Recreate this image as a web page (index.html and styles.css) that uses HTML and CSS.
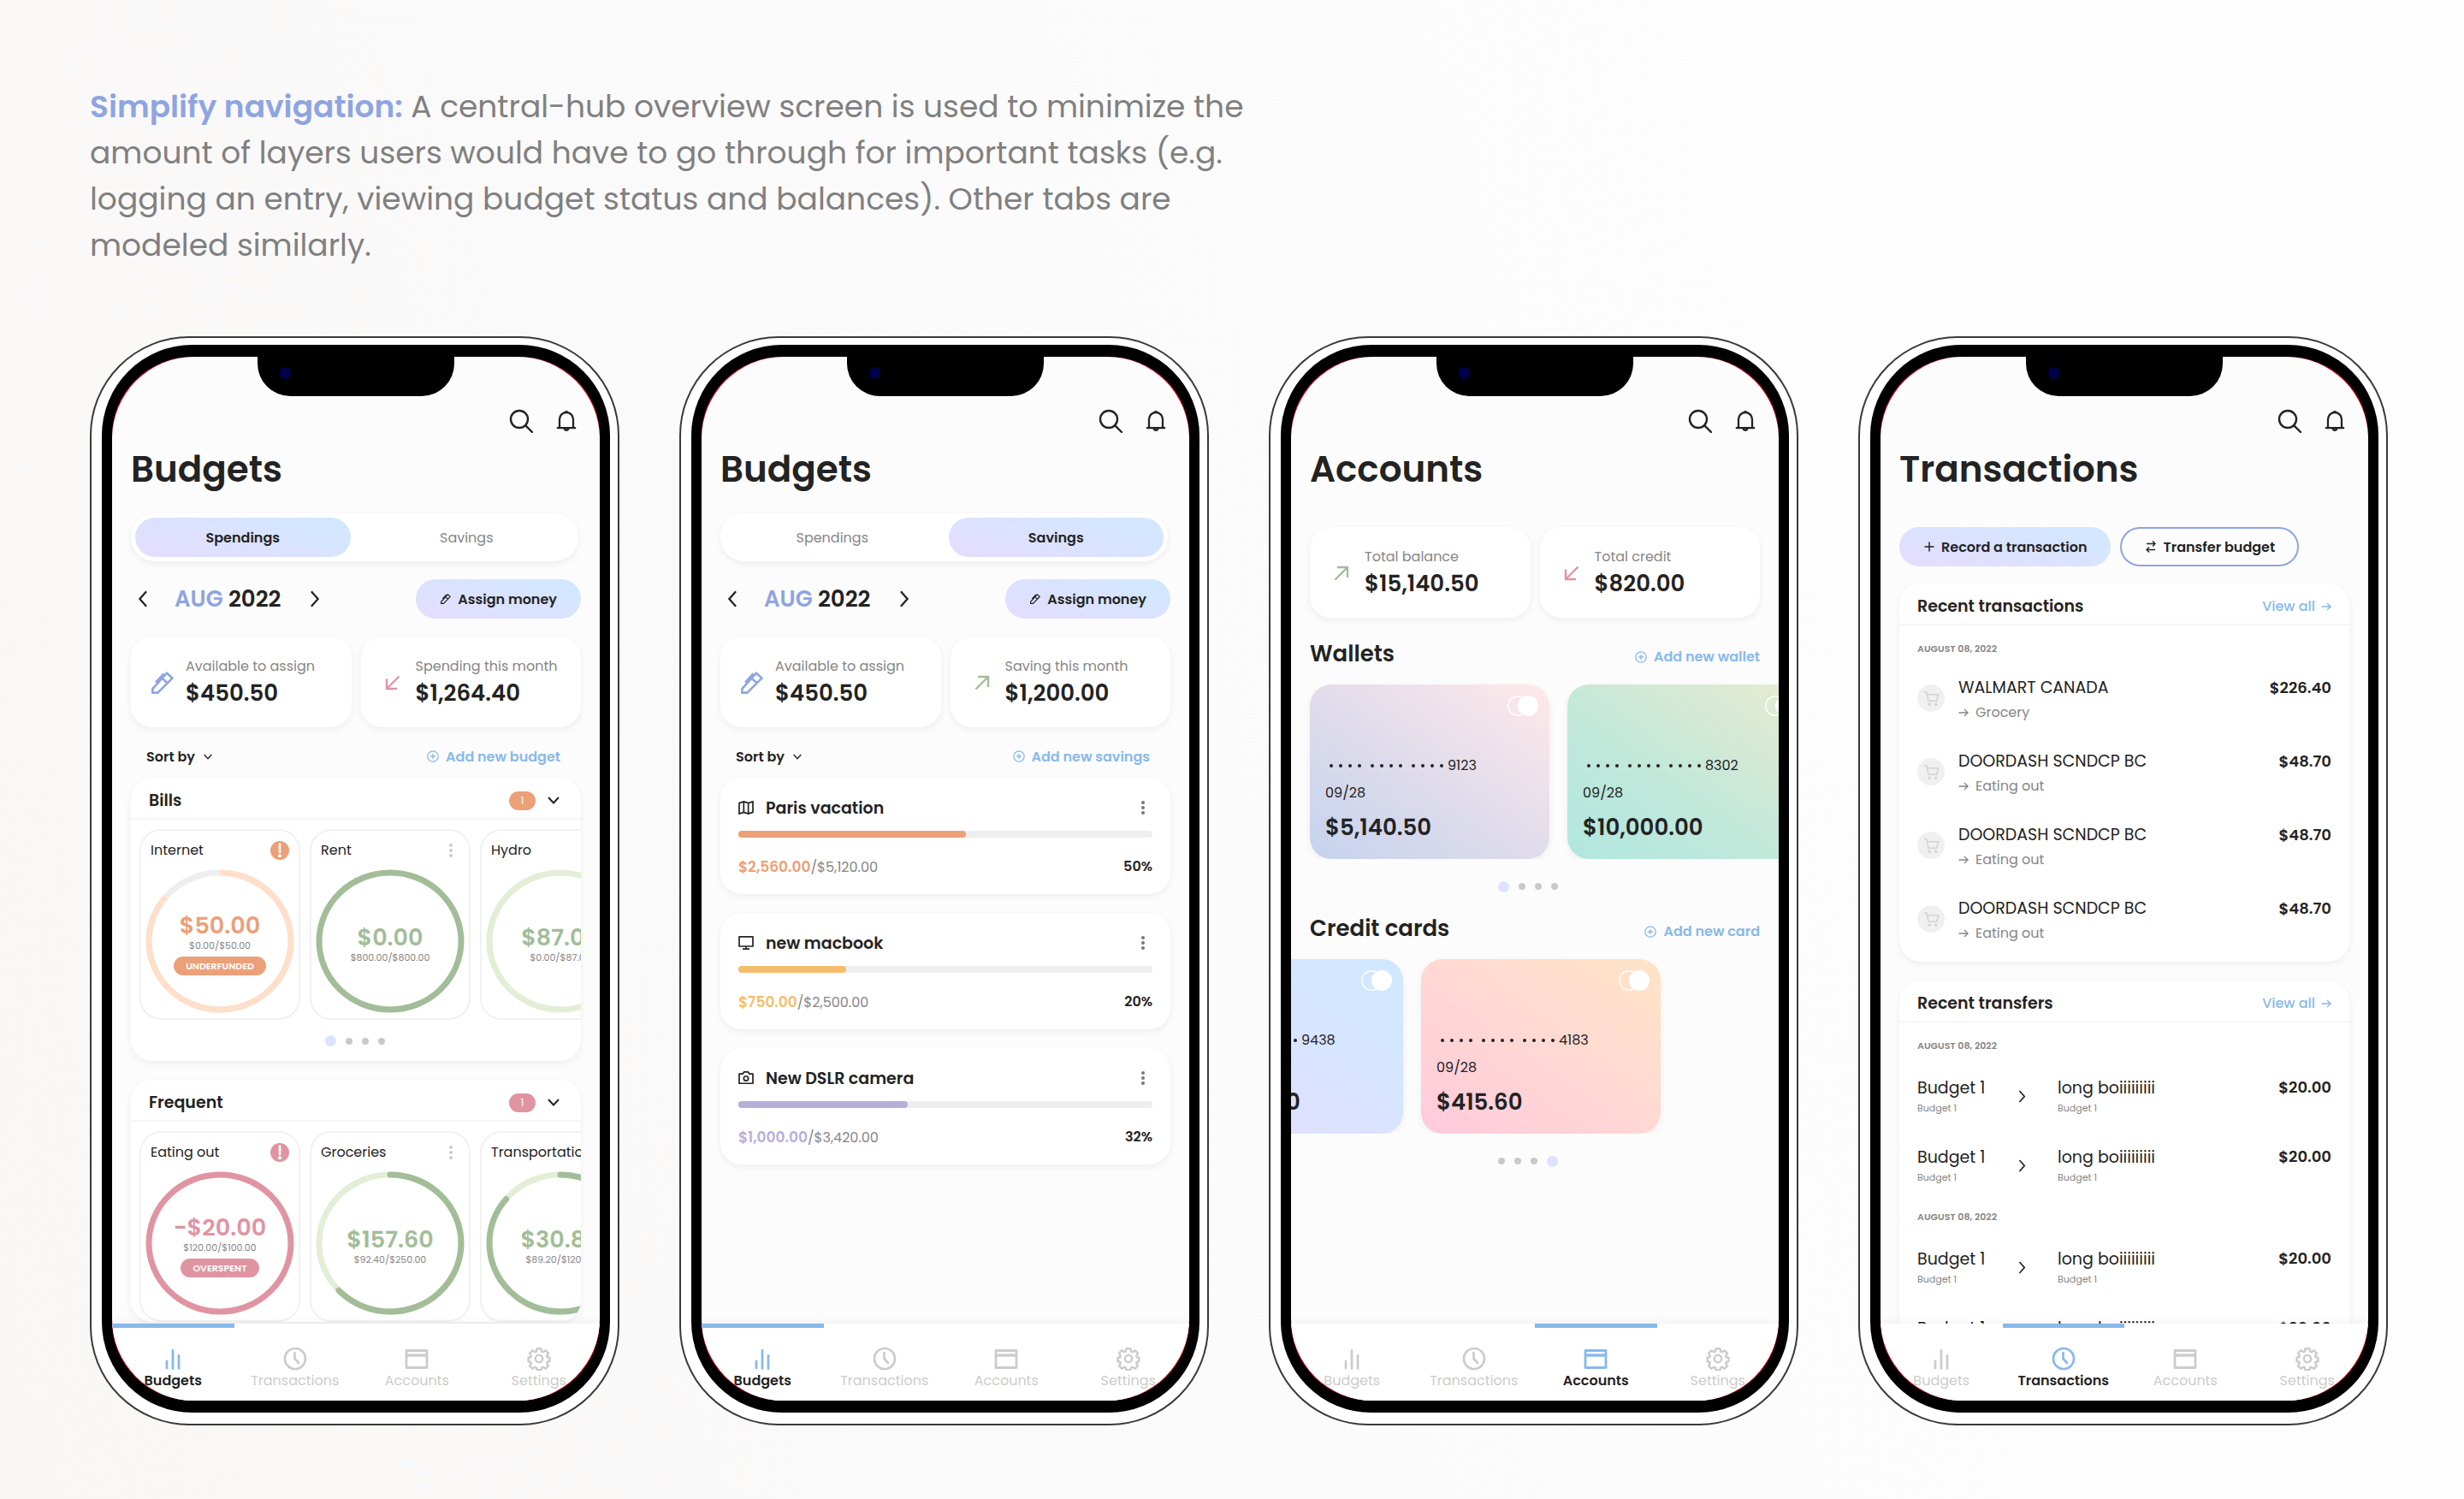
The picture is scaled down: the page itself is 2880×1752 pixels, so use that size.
FILE: index.html
```html
<!DOCTYPE html>
<html lang="en">
<head>
<meta charset="utf-8">
<meta name="viewport" content="width=device-width, initial-scale=1">
<title>Simplify navigation</title>
<link rel="stylesheet" href="styles.css">
</head>
<body>
<svg class="sprite" aria-hidden="true">
  <symbol id="search" viewBox="0 0 28 28"><g fill="none" stroke="currentColor" stroke-width="2.4" stroke-linecap="round"><circle cx="12" cy="12" r="10"/><path d="M19.3 19.3 27 27"/></g></symbol>
  <symbol id="bell" viewBox="0 0 24 27"><g fill="none" stroke="currentColor" stroke-width="2.3" stroke-linejoin="round" stroke-linecap="round"><path d="M1.8 21.2h20.4M4 21V11a8 8 0 0 1 16 0v10M9.5 21.6a2.6 3 0 0 0 5 0"/><path d="M11 2.4h2"/></g></symbol>
  <symbol id="pen" viewBox="0 0 24 24"><path d="M1.3 22.7v-4.2L16.6 1.6l5.9 5.4L6.8 22.7zM11.6 7.2l5.8 5.2M4.6 11.6 12.6 3l2.4 1.6" fill="none" stroke="currentColor" stroke-width="2.4"/></symbol>
  <symbol id="down-left" viewBox="0 0 18 18"><path d="M16.5 1.5 2 16M2 4.5V16h12" fill="none" stroke="currentColor" stroke-width="2.4"/></symbol>
  <symbol id="up-right" viewBox="0 0 18 18"><path d="M1.5 16.5 16 2M4 2h12v12" fill="none" stroke="currentColor" stroke-width="2.4"/></symbol>
  <symbol id="chev-left" viewBox="0 0 12 22"><path d="M10.5 1.5 2 11l8.500 9.500" fill="none" stroke="currentColor" stroke-width="2.500"/></symbol>
  <symbol id="chev-right" viewBox="0 0 12 22"><path d="M1.5 1.5 10 11l-8.500 9.500" fill="none" stroke="currentColor" stroke-width="2.500"/></symbol>
  <symbol id="chev-down" viewBox="0 0 14 9"><path d="m1 1 6 6.500L13 1" fill="none" stroke="currentColor" stroke-width="2"/></symbol>
  <symbol id="plus-circle" viewBox="0 0 14 14"><path d="M7 4v6M4 7h6" stroke="currentColor" stroke-width="1.3"/><circle cx="7" cy="7" r="6.200" fill="none" stroke="currentColor" stroke-width="1.300"/></symbol>
  <symbol id="plus" viewBox="0 0 12 12"><path d="M6 .5v11M.5 6h11" stroke="currentColor" stroke-width="1.5"/></symbol>
  <symbol id="swap" viewBox="0 0 12 14"><path d="M1 3.500h10M8 .5l3 3-3 3M11 10.500H1M4 7.500l-3 3 3 3" fill="none" stroke="currentColor" stroke-width="1.400"/></symbol>
  <symbol id="arrow" viewBox="0 0 12 10"><path d="M.5 5h10.500M7 1l4 4-4 4" fill="none" stroke="currentColor" stroke-width="1.400"/></symbol>
  <symbol id="kebab" viewBox="0 0 4 16"><g fill="currentColor"><circle cx="2" cy="2" r="2"/><circle cx="2" cy="8" r="2"/><circle cx="2" cy="14" r="2"/></g></symbol>
  <symbol id="alert" viewBox="0 0 22 22"><circle cx="11" cy="11" r="11" fill="currentColor"/><path d="M11 3.500v9.500" stroke="#fff" stroke-width="2.600" stroke-linecap="round"/><circle cx="11" cy="17.300" r="2" fill="#fff"/></symbol>
  <symbol id="map" viewBox="0 0 20 18"><path d="m1 3 6-2v14l-6 2zM7 1l6 2v14l-6-2M13 3l6-2v14l-6 2" fill="none" stroke="currentColor" stroke-width="1.900" stroke-linejoin="round"/></symbol>
  <symbol id="monitor" viewBox="0 0 20 18"><path d="M1 1h18v12.500H1zM10 13.500V17M5.500 17h9" fill="none" stroke="currentColor" stroke-width="1.900" stroke-linejoin="round"/></symbol>
  <symbol id="camera" viewBox="0 0 20 18"><path d="M1 3.500h4.500L7.500 1h5l2 2.500H19V16H1z" fill="none" stroke="currentColor" stroke-width="1.900" stroke-linejoin="round"/><circle cx="10" cy="9.500" r="3" fill="none" stroke="currentColor" stroke-width="1.900"/></symbol>
  <symbol id="cart" viewBox="0 0 20 20"><path d="M1 2h3l2.500 11h10L18.500 5H5" fill="none" stroke="currentColor" stroke-width="1.600"/><circle cx="7.500" cy="17" r="1.700" fill="currentColor"/><circle cx="15.500" cy="17" r="1.700" fill="currentColor"/></symbol>
  <symbol id="brand" viewBox="0 0 36 24"><circle cx="12" cy="12" r="11.200" fill="none" stroke="#fff" stroke-width="1.400"/><circle cx="24" cy="12" r="12" fill="#fff"/></symbol>
  <symbol id="bars" viewBox="0 0 28 28"><path d="M7 17v8M14 4.500v21M21 10.500v15" stroke="currentColor" stroke-width="2.800" stroke-linecap="round"/></symbol>
  <symbol id="clock" viewBox="0 0 28 28"><g fill="none" stroke="currentColor" stroke-width="2.700" stroke-linecap="round"><circle cx="14" cy="14" r="12"/><path d="M13.500 7v7l4.500 5"/></g></symbol>
  <symbol id="card" viewBox="0 0 28 28"><path d="M2 4.500h24v20H2z" fill="none" stroke="currentColor" stroke-width="2.800" stroke-linejoin="round"/><path d="M2 10h24" stroke="currentColor" stroke-width="3.400"/></symbol>
  <symbol id="gear" viewBox="0 0 28 28"><g fill="none" stroke="currentColor" stroke-width="2.500" stroke-linejoin="round"><circle cx="14" cy="14" r="4.200"/><path d="M11.600 2.200h4.800l.8 3.400 1.500.6 3-1.800 3.300 3.300-1.800 3 .6 1.500 2.600.6v4.400l-2.600.6-.6 1.500 1.800 3-3.300 3.300-3-1.800-1.500.6-.8 2.800h-4.800l-.8-2.800-1.500-.6-3 1.800L3 22.300l1.800-3-.6-1.500-2.600-.6v-4.400l2.600-.6.6-1.500-1.800-3 3.300-3.300 3 1.800 1.500-.6z"/></g></symbol>
</svg>

<header class="intro">
  <p><strong>Simplify navigation:</strong> A central-hub overview screen is used to minimize the<br>amount of layers users would have to go through for important tasks (e.g.<br>logging an entry, viewing budget status and balances). Other tabs are<br>modeled similarly.</p>
</header>

<div class="phones">

  <!-- Budgets: spendings -->
  <article class="phone"><div class="bezel"><div class="screen">
    <div class="notch"></div>
    <main class="content">
      <div class="tools"><button class="icon-btn" aria-label="Search"><svg class="i28"><use href="#search"/></svg></button><button class="icon-btn" aria-label="Notifications"><svg class="i-bell"><use href="#bell"/></svg></button></div>
      <h1>Budgets</h1>
      <div class="toggle"><button class="on">Spendings</button><button>Savings</button></div>
      <div class="month">
        <button class="icon-btn" aria-label="Previous month"><svg class="i-side"><use href="#chev-left"/></svg></button>
        <span class="date"><b>AUG</b> 2022</span>
        <button class="icon-btn" aria-label="Next month"><svg class="i-side"><use href="#chev-right"/></svg></button>
        <button class="pill"><svg class="i12"><use href="#pen"/></svg>Assign money</button>
      </div>
      <div class="stats">
        <div class="stat"><svg class="i26 blue"><use href="#pen"/></svg><div><span>Available to assign</span><b>$450.50</b></div></div>
        <div class="stat"><svg class="i18 red"><use href="#down-left"/></svg><div><span>Spending this month</span><b>$1,264.40</b></div></div>
      </div>
      <div class="sortbar"><button class="sort">Sort by<svg class="i-down-s"><use href="#chev-down"/></svg></button><a href="#" class="add"><svg class="i14"><use href="#plus-circle"/></svg>Add new budget</a></div>

      <section class="group">
        <header class="group-head"><h2>Bills</h2><span class="count orange-bg">1</span><button class="icon-btn" aria-label="Collapse Bills"><svg class="i-down"><use href="#chev-down"/></svg></button></header>
        <div class="rings">
          <div class="ring-card"><div class="ring-head"><h3>Internet</h3><svg class="i22 orange"><use href="#alert"/></svg></div>
            <div class="ring"><svg viewBox="0 0 174 168"><ellipse cx="87" cy="84" rx="83" ry="80" stroke="#eeeeee"/><path pathLength="100" d="M87 4a83 80 0 0 1 0 160a83 80 0 0 1 0-160" stroke="#ffdfca" stroke-dasharray="86 100"/></svg>
              <div class="ring-text"><b class="orange">$50.00</b><small>$0.00/$50.00</small><em class="orange-bg">UNDERFUNDED</em></div></div></div>
          <div class="ring-card"><div class="ring-head"><h3>Rent</h3><button class="icon-btn faint" aria-label="Rent options"><svg class="i-kebab"><use href="#kebab"/></svg></button></div>
            <div class="ring"><svg viewBox="0 0 174 168"><ellipse cx="87" cy="84" rx="83" ry="80" stroke="#a2bd98"/></svg>
              <div class="ring-text"><b class="green">$0.00</b><small>$800.00/$800.00</small></div></div></div>
          <div class="ring-card"><div class="ring-head"><h3>Hydro</h3></div>
            <div class="ring"><svg viewBox="0 0 174 168"><ellipse cx="87" cy="84" rx="83" ry="80" stroke="#e4eed7"/></svg>
              <div class="ring-text"><b class="green">$87.00</b><small>$0.00/$87.00</small></div></div></div>
        </div>
        <div class="dots"><i class="on"></i><i></i><i></i><i></i></div>
      </section>

      <section class="group">
        <header class="group-head"><h2>Frequent</h2><span class="count red-bg">1</span><button class="icon-btn" aria-label="Collapse Frequent"><svg class="i-down"><use href="#chev-down"/></svg></button></header>
        <div class="rings">
          <div class="ring-card"><div class="ring-head"><h3>Eating out</h3><svg class="i22 red"><use href="#alert"/></svg></div>
            <div class="ring"><svg viewBox="0 0 174 168"><ellipse cx="87" cy="84" rx="83" ry="80" stroke="#e094a2"/></svg>
              <div class="ring-text"><b class="red">-$20.00</b><small>$120.00/$100.00</small><em class="red-bg">OVERSPENT</em></div></div></div>
          <div class="ring-card"><div class="ring-head"><h3>Groceries</h3><button class="icon-btn faint" aria-label="Groceries options"><svg class="i-kebab"><use href="#kebab"/></svg></button></div>
            <div class="ring"><svg viewBox="0 0 174 168"><ellipse cx="87" cy="84" rx="83" ry="80" stroke="#e4eed7"/><path pathLength="100" stroke-linecap="round" d="M87 4a83 80 0 0 1 0 160a83 80 0 0 1 0-160" stroke="#a2bd98" stroke-dasharray="63 100"/></svg>
              <div class="ring-text"><b class="green">$157.60</b><small>$92.40/$250.00</small></div></div></div>
          <div class="ring-card"><div class="ring-head"><h3>Transportation</h3></div>
            <div class="ring"><svg viewBox="0 0 174 168"><ellipse cx="87" cy="84" rx="83" ry="80" stroke="#e4eed7"/><path pathLength="100" stroke-linecap="round" d="M87 4a83 80 0 0 1 0 160a83 80 0 0 1 0-160" stroke="#a2bd98" stroke-dasharray="86 100"/></svg>
              <div class="ring-text"><b class="green">$30.80</b><small>$89.20/$120.00</small></div></div></div>
        </div>
      </section>
    </main>
    <nav class="tabs"><a href="#" class="on"><svg class="i28"><use href="#bars"/></svg>Budgets</a><a href="#"><svg class="i28"><use href="#clock"/></svg>Transactions</a><a href="#"><svg class="i28"><use href="#card"/></svg>Accounts</a><a href="#"><svg class="i28"><use href="#gear"/></svg>Settings</a></nav>
  </div></div></article>

  <!-- Budgets: savings -->
  <article class="phone"><div class="bezel"><div class="screen">
    <div class="notch"></div>
    <main class="content">
      <div class="tools"><button class="icon-btn" aria-label="Search"><svg class="i28"><use href="#search"/></svg></button><button class="icon-btn" aria-label="Notifications"><svg class="i-bell"><use href="#bell"/></svg></button></div>
      <h1>Budgets</h1>
      <div class="toggle"><button>Spendings</button><button class="on">Savings</button></div>
      <div class="month">
        <button class="icon-btn" aria-label="Previous month"><svg class="i-side"><use href="#chev-left"/></svg></button>
        <span class="date"><b>AUG</b> 2022</span>
        <button class="icon-btn" aria-label="Next month"><svg class="i-side"><use href="#chev-right"/></svg></button>
        <button class="pill"><svg class="i12"><use href="#pen"/></svg>Assign money</button>
      </div>
      <div class="stats">
        <div class="stat"><svg class="i26 blue"><use href="#pen"/></svg><div><span>Available to assign</span><b>$450.50</b></div></div>
        <div class="stat"><svg class="i18 green"><use href="#up-right"/></svg><div><span>Saving this month</span><b>$1,200.00</b></div></div>
      </div>
      <div class="sortbar"><button class="sort">Sort by<svg class="i-down-s"><use href="#chev-down"/></svg></button><a href="#" class="add"><svg class="i14"><use href="#plus-circle"/></svg>Add new savings</a></div>

      <section class="goal">
        <header><svg class="i-goal"><use href="#map"/></svg><h2>Paris vacation</h2><button class="icon-btn gray" aria-label="Paris vacation options"><svg class="i-kebab"><use href="#kebab"/></svg></button></header>
        <div class="track"><div class="fill orange-bg" style="width:55%"></div></div>
        <p><span><b class="orange">$2,560.00</b>/$5,120.00</span><strong>50%</strong></p>
      </section>
      <section class="goal">
        <header><svg class="i-goal"><use href="#monitor"/></svg><h2>new macbook</h2><button class="icon-btn gray" aria-label="new macbook options"><svg class="i-kebab"><use href="#kebab"/></svg></button></header>
        <div class="track"><div class="fill yellow-bg" style="width:26%"></div></div>
        <p><span><b class="yellow">$750.00</b>/$2,500.00</span><strong>20%</strong></p>
      </section>
      <section class="goal">
        <header><svg class="i-goal"><use href="#camera"/></svg><h2>New DSLR camera</h2><button class="icon-btn gray" aria-label="New DSLR camera options"><svg class="i-kebab"><use href="#kebab"/></svg></button></header>
        <div class="track"><div class="fill purple-bg" style="width:41%"></div></div>
        <p><span><b class="purple">$1,000.00</b>/$3,420.00</span><strong>32%</strong></p>
      </section>
    </main>
    <nav class="tabs"><a href="#" class="on"><svg class="i28"><use href="#bars"/></svg>Budgets</a><a href="#"><svg class="i28"><use href="#clock"/></svg>Transactions</a><a href="#"><svg class="i28"><use href="#card"/></svg>Accounts</a><a href="#"><svg class="i28"><use href="#gear"/></svg>Settings</a></nav>
  </div></div></article>

  <!-- Accounts -->
  <article class="phone"><div class="bezel"><div class="screen">
    <div class="notch"></div>
    <main class="content">
      <div class="tools"><button class="icon-btn" aria-label="Search"><svg class="i28"><use href="#search"/></svg></button><button class="icon-btn" aria-label="Notifications"><svg class="i-bell"><use href="#bell"/></svg></button></div>
      <h1 class="spaced">Accounts</h1>
      <div class="stats">
        <div class="stat"><svg class="i18 green"><use href="#up-right"/></svg><div><span>Total balance</span><b>$15,140.50</b></div></div>
        <div class="stat"><svg class="i18 red"><use href="#down-left"/></svg><div><span>Total credit</span><b>$820.00</b></div></div>
      </div>
      <div class="section-head"><h2>Wallets</h2><a href="#" class="add"><svg class="i14"><use href="#plus-circle"/></svg>Add new wallet</a></div>
      <div class="deck">
        <div class="bank iris"><svg class="brand"><use href="#brand"/></svg><p class="number"><span><i></i><i></i><i></i><i></i></span><span><i></i><i></i><i></i><i></i></span><span><i></i><i></i><i></i><i></i></span>9123</p><p>09/28</p><b>$5,140.50</b></div>
        <div class="bank mint"><svg class="brand"><use href="#brand"/></svg><p class="number"><span><i></i><i></i><i></i><i></i></span><span><i></i><i></i><i></i><i></i></span><span><i></i><i></i><i></i><i></i></span>8302</p><p>09/28</p><b>$10,000.00</b></div>
      </div>
      <div class="dots deck-dots"><i class="on"></i><i></i><i></i><i></i></div>
      <div class="section-head"><h2>Credit cards</h2><a href="#" class="add"><svg class="i14"><use href="#plus-circle"/></svg>Add new card</a></div>
      <div class="deck at-end">
        <div class="bank sky"><svg class="brand"><use href="#brand"/></svg><p class="number"><span><i></i><i></i><i></i><i></i></span><span><i></i><i></i><i></i><i></i></span><span><i></i><i></i><i></i><i></i></span>9438</p><p>09/28</p><b>$10,404.40</b></div>
        <div class="bank peach"><svg class="brand"><use href="#brand"/></svg><p class="number"><span><i></i><i></i><i></i><i></i></span><span><i></i><i></i><i></i><i></i></span><span><i></i><i></i><i></i><i></i></span>4183</p><p>09/28</p><b>$415.60</b></div>
      </div>
      <div class="dots deck-dots"><i></i><i></i><i></i><i class="on"></i></div>
    </main>
    <nav class="tabs"><a href="#"><svg class="i28"><use href="#bars"/></svg>Budgets</a><a href="#"><svg class="i28"><use href="#clock"/></svg>Transactions</a><a href="#" class="on"><svg class="i28"><use href="#card"/></svg>Accounts</a><a href="#"><svg class="i28"><use href="#gear"/></svg>Settings</a></nav>
  </div></div></article>

  <!-- Transactions -->
  <article class="phone"><div class="bezel"><div class="screen">
    <div class="notch"></div>
    <main class="content">
      <div class="tools"><button class="icon-btn" aria-label="Search"><svg class="i28"><use href="#search"/></svg></button><button class="icon-btn" aria-label="Notifications"><svg class="i-bell"><use href="#bell"/></svg></button></div>
      <h1 class="spaced">Transactions</h1>
      <div class="actions"><button class="pill"><svg class="i12"><use href="#plus"/></svg>Record a transaction</button><button class="pill outline"><svg class="i12"><use href="#swap"/></svg>Transfer budget</button></div>

      <section class="group">
        <header class="group-head"><h2>Recent transactions</h2><a href="#" class="view">View all<svg class="i-arrow"><use href="#arrow"/></svg></a></header>
        <h4>AUGUST 08, 2022</h4>
        <ul class="entries">
          <li><span class="cart"><svg><use href="#cart"/></svg></span><div><p>WALMART CANADA</p><small><svg class="i-arrow"><use href="#arrow"/></svg>Grocery</small></div><b>$226.40</b></li>
          <li><span class="cart"><svg><use href="#cart"/></svg></span><div><p>DOORDASH SCNDCP BC</p><small><svg class="i-arrow"><use href="#arrow"/></svg>Eating out</small></div><b>$48.70</b></li>
          <li><span class="cart"><svg><use href="#cart"/></svg></span><div><p>DOORDASH SCNDCP BC</p><small><svg class="i-arrow"><use href="#arrow"/></svg>Eating out</small></div><b>$48.70</b></li>
          <li><span class="cart"><svg><use href="#cart"/></svg></span><div><p>DOORDASH SCNDCP BC</p><small><svg class="i-arrow"><use href="#arrow"/></svg>Eating out</small></div><b>$48.70</b></li>
        </ul>
      </section>

      <section class="group">
        <header class="group-head"><h2>Recent transfers</h2><a href="#" class="view">View all<svg class="i-arrow"><use href="#arrow"/></svg></a></header>
        <h4>AUGUST 08, 2022</h4>
        <ul class="transfers">
          <li><div><p>Budget 1</p><small>Budget 1</small></div><svg class="i-to"><use href="#chev-right"/></svg><div><p>long boiiiiiiiii</p><small>Budget 1</small></div><b>$20.00</b></li>
          <li><div><p>Budget 1</p><small>Budget 1</small></div><svg class="i-to"><use href="#chev-right"/></svg><div><p>long boiiiiiiiii</p><small>Budget 1</small></div><b>$20.00</b></li>
        </ul>
        <h4>AUGUST 08, 2022</h4>
        <ul class="transfers">
          <li><div><p>Budget 1</p><small>Budget 1</small></div><svg class="i-to"><use href="#chev-right"/></svg><div><p>long boiiiiiiiii</p><small>Budget 1</small></div><b>$20.00</b></li>
          <li><div><p>Budget 1</p><small>Budget 1</small></div><svg class="i-to"><use href="#chev-right"/></svg><div><p>long boiiiiiiiii</p><small>Budget 1</small></div><b>$20.00</b></li>
        </ul>
      </section>
    </main>
    <nav class="tabs"><a href="#"><svg class="i28"><use href="#bars"/></svg>Budgets</a><a href="#" class="on"><svg class="i28"><use href="#clock"/></svg>Transactions</a><a href="#"><svg class="i28"><use href="#card"/></svg>Accounts</a><a href="#"><svg class="i28"><use href="#gear"/></svg>Settings</a></nav>
  </div></div></article>
</div>
</body>
</html>
```
FILE: styles.css
```css
:root {
  --ink: #232323;
  --muted: #868686;
  --faint: #cccccc;
  --sky: #88b9ea;
  --blue: #8ea5e0;
  --orange: #eba078;
  --red: #e094a2;
  --green: #a2bd98;
  --yellow: #f5bd6c;
  --purple: #b7aeda;
  --lilac: linear-gradient(15deg, #e6dcfd, #dbe2ff 45%, #d0e9ff);
  --shadow: 0 3px 8px rgba(0, 0, 0, 0.06);
}

* { box-sizing: border-box; margin: 0; padding: 0; }

body {
  min-height: 100vh;
  padding: 98px 89px 86px 105px;
  font-family: Poppins, Inter, "Open Sans", sans-serif;
  font-size: 16px;
  color: var(--ink);
  background: linear-gradient(75deg, #f8f7f6, #fbfafa 35%, #fdfdfd 75%, #fdfdfd);
}

button, a { font: inherit; color: inherit; text-decoration: none; }
button { border: 0; background: none; }
h1, h2, h3, h4 { font-weight: 600; }
ul { list-style: none; }
b, strong { font-weight: 600; }
svg { display: block; flex: none; }
.sprite { display: none; }

.intro { margin-bottom: 79px; font-size: 36px; line-height: 54px; color: #808080; }
.intro strong { color: var(--blue); }

.phones { display: grid; grid-template-columns: repeat(4, minmax(0, 1fr)); gap: 70px; }

/* Phone shell */
.phone { aspect-ratio: 619 / 1273; padding: 8px 9px 13px 12px; border: 2px solid #3a3a3a; border-radius: 116px; background: #fff; }
/* The content-box layer leaves a hairline of red in the corners of the display */
.bezel { height: 100%; padding: 14px 12px 14px 12px; border-radius: 106px; background: linear-gradient(#c8102e, #c8102e) content-box, #000; }
.screen { position: relative; display: flex; flex-direction: column; height: 100%; border-radius: 96px; overflow: hidden; background: #fcfcfc; }
.notch { position: absolute; top: 0; left: 50%; width: 230px; height: 46px; margin-left: -115px; border-radius: 0 0 38px 38px; background: #000; }
.notch::after { content: ""; display: block; width: 13px; height: 14px; margin: 12px 0 0 26px; border-radius: 50%; background: #00004c; }

.content { flex: 1; min-height: 0; padding: 61px 22px 0; overflow: hidden; }
.icon-btn { display: flex; align-items: center; }
.tools { display: flex; justify-content: flex-end; gap: 27px; height: 28px; padding-right: 5px; }
h1 { margin: 17px 0 25px; font-size: 42px; line-height: 52px; }
h1.spaced { margin-bottom: 41px; }

/* Icon sizes */
.i28 { width: 28px; height: 28px; }
.i26 { width: 26px; height: 26px; }
.i22 { width: 22px; height: 22px; }
.i18 { width: 18px; height: 18px; margin: 0 4px; }
.i14 { width: 14px; height: 14px; }
.i12 { width: 12px; height: 14px; }
.i-bell { width: 24px; height: 27px; }
.i-side { width: 12px; height: 20px; }
.i-down { width: 14px; height: 9px; }
.i-down-s { width: 10px; height: 7px; }
.i-kebab { width: 4px; height: 16px; }
.i-goal { width: 18px; height: 16px; }
.i-arrow { width: 12px; height: 10px; }
.i-to { width: 9px; height: 15px; }

/* Colours */
.blue { color: var(--blue); }
.orange { color: var(--orange); }
.red { color: var(--red); }
.green { color: var(--green); }
.yellow { color: var(--yellow); }
.purple { color: var(--purple); }
.gray { color: #777; }
.faint { color: var(--faint); }
.orange-bg { background: var(--orange); }
.red-bg { background: var(--red); }
.yellow-bg { background: var(--yellow); }
.purple-bg { background: var(--purple); }

/* Controls */
.toggle { display: flex; gap: 10px; height: 56px; padding: 5px; margin: 0 3px 21px 0; border-radius: 28px; background: #fff; box-shadow: var(--shadow); }
.toggle button { flex: 1; border-radius: 23px; color: var(--muted); }
.toggle .on { font-weight: 600; color: var(--ink); background: var(--lilac); }

.pill { display: flex; align-items: center; gap: 8px; height: 46px; padding: 0 28px 0 29px; border-radius: 23px; font-weight: 600; white-space: nowrap; background: var(--lilac); }
.outline { padding: 0 26px 0 28px; border: 2px solid var(--blue); background: none; }
.actions { display: flex; gap: 11px; margin-bottom: 20px; }

.month { display: flex; align-items: center; margin-bottom: 21px; padding-left: 8px; }
.date { margin: 0 34px 0 31px; font-size: 26px; font-weight: 600; line-height: 46px; }
.date b { color: var(--blue); }
.month .pill { margin-left: auto; }

.stats { display: grid; grid-template-columns: 1fr 1fr; gap: 11px; margin-bottom: 21px; }
.stat { display: flex; align-items: center; gap: 14px; height: 106px; padding: 2px 0 0 24px; border-radius: 25px; background: #fff; box-shadow: var(--shadow); white-space: nowrap; }
.stat span { display: block; line-height: 24px; color: var(--muted); }
.stat b { display: block; font-size: 26px; line-height: 38px; }

.sortbar { display: flex; align-items: center; justify-content: space-between; height: 26px; margin-bottom: 12px; padding: 0 24px 0 18px; }
.sort { display: flex; align-items: center; gap: 10px; font-weight: 600; }
.add, .view { display: flex; align-items: center; gap: 8px; font-weight: 600; color: var(--sky); }

/* Grouped cards */
.group { margin-bottom: 22px; border-radius: 25px; background: #fff; box-shadow: var(--shadow); overflow: hidden; }
.group-head { display: flex; align-items: center; height: 49px; padding: 6px 21px 0; border-bottom: 2px solid #f6f6f6; }
.group-head h2 { flex: 1; font-size: 19px; }
.group-head .icon-btn { margin: 0 4px 0 14px; }
.count { width: 31px; border-radius: 11px; font-size: 12px; line-height: 22px; text-align: center; color: #fff; }

.rings { display: flex; gap: 11px; padding: 11px 10px 0; overflow: hidden; }
.ring-card { flex: none; width: 188px; height: 223px; padding: 0 5px; border: 2px solid #f1f1f1; border-radius: 25px; }
.ring-head { display: flex; align-items: center; justify-content: space-between; height: 45px; padding: 0 6px; }
.ring-head .icon-btn { padding-right: 8px; }
h3 { font-size: 16px; font-weight: 400; }
.ring { display: grid; }
.ring > * { grid-area: 1 / 1; }
.ring svg { width: 100%; height: 168px; fill: none; stroke-width: 7px; }
.ring-text { display: flex; flex-direction: column; align-items: center; justify-content: center; padding-top: 7px; }
.ring-text b { font-size: 27px; line-height: 30px; }
.ring-text small { font-size: 11px; line-height: 16px; color: var(--muted); }
.ring-text em { margin-top: 5px; padding: 0 14px; border-radius: 11px; font-size: 11px; font-style: normal; font-weight: 600; line-height: 22px; color: #fff; }

.dots { display: flex; align-items: center; justify-content: center; gap: 11px; height: 48px; padding: 1px 2px 0 0; }
.dots i { width: 8px; height: 8px; border-radius: 50%; background: #c9c9c9; }
.dots .on { width: 13px; height: 13px; background: #dde2fe; }
.deck-dots { height: 63px; padding: 1px 16px 0 0; }

/* Saving goals */
.goal { height: 136px; margin-bottom: 22px; padding: 20px 21px 0; border-radius: 25px; background: #fff; box-shadow: var(--shadow); }
.goal header { display: flex; align-items: center; gap: 14px; height: 30px; margin-bottom: 12px; }
.goal h2 { flex: 1; font-size: 19px; }
.goal .icon-btn { margin-right: 9px; }
.track { height: 8px; border-radius: 4px; background: #eeeeee; }
.fill { height: 8px; border-radius: 4px; }
.goal p { display: flex; justify-content: space-between; margin-top: 22px; line-height: 24px; color: var(--muted); }
.goal b { font-size: 17px; }
.goal strong { color: var(--ink); }

/* Accounts */
.section-head { display: flex; align-items: flex-end; justify-content: space-between; line-height: 36px; }
.section-head h2 { font-size: 26px; }
.section-head .add { line-height: 28px; }
.stats + .section-head { margin-top: 24px; }
.deck { display: flex; gap: 21px; margin: 10px -22px 0; padding: 8px 22px 0; overflow: hidden; }
.at-end { justify-content: flex-end; padding-right: 138px; }
.bank { position: relative; display: flex; flex-direction: column; justify-content: flex-end; flex: none; width: 280px; height: 204px; padding: 0 18px 19px; border-radius: 25px; line-height: 32px; box-shadow: var(--shadow); }
.bank > b { margin-top: 6px; font-size: 26px; line-height: 36px; }
.brand { position: absolute; top: 13px; right: 13px; width: 36px; height: 24px; }
.number { display: flex; align-items: center; padding-left: 5px; }
.number span { display: flex; gap: 7px; margin-right: 11px; }
.number span:nth-child(3) { margin-right: 5px; }
.number i { width: 4px; height: 4px; border-radius: 50%; background: var(--ink); }
.iris { background: linear-gradient(35deg, #c5d3ee, #dedbeb 45%, #ffe9ea); }
.mint { background: linear-gradient(35deg, #b0e7df, #c3e8da 45%, #e9ebcf); }
.sky { background: linear-gradient(35deg, #e6dcfd, #d8e4ff 55%, #cfe9ff); }
.peach { background: linear-gradient(35deg, #ffcadd, #ffd8d3 50%, #ffe4c6); }

/* Transactions */
.view { gap: 7px; font-weight: 500; }
h4 { height: 42px; padding: 19px 21px 0; font-size: 11px; line-height: 16px; color: var(--muted); }
.entries { padding: 0 21px 7px; }
.entries li { display: flex; align-items: center; gap: 16px; height: 86px; }
.entries div { flex: 1; padding-top: 5px; }
.entries p, .transfers p { font-size: 19px; line-height: 28px; }
.entries b, .transfers b { align-self: flex-start; font-size: 18px; line-height: 28px; }
.entries b { margin-top: 17px; }
.entries small { display: flex; align-items: center; gap: 8px; font-size: 16px; line-height: 29px; color: var(--muted); }
.cart { display: grid; place-items: center; width: 32px; height: 32px; border-radius: 50%; color: #d2d2d2; background: #f0f0f0; }
.cart svg { width: 19px; height: 19px; }
.transfers { padding: 0 21px; }
.transfers li { display: grid; grid-template-columns: 118px 46px 1fr auto; align-items: center; height: 81px; padding-top: 7px; }
.transfers li:last-child { height: 77px; padding-top: 11px; }
.transfers b { margin-top: 13px; }
.transfers li:last-child b { margin-top: 9px; }
.transfers small { display: block; font-size: 11px; line-height: 18px; color: var(--muted); }

/* Tab bar */
.tabs { position: relative; display: grid; grid-template-columns: repeat(4, 1fr); height: 90px; background: #fff; box-shadow: 0 -3px 8px rgba(0, 0, 0, 0.04); }
.tabs a { display: flex; flex-direction: column; align-items: center; padding-top: 22px; border-top: 5px solid transparent; line-height: 23px; color: var(--faint); }
.tabs .on { border-color: var(--sky); font-weight: 600; color: var(--ink); }
.tabs .on svg { color: var(--sky); }
```
